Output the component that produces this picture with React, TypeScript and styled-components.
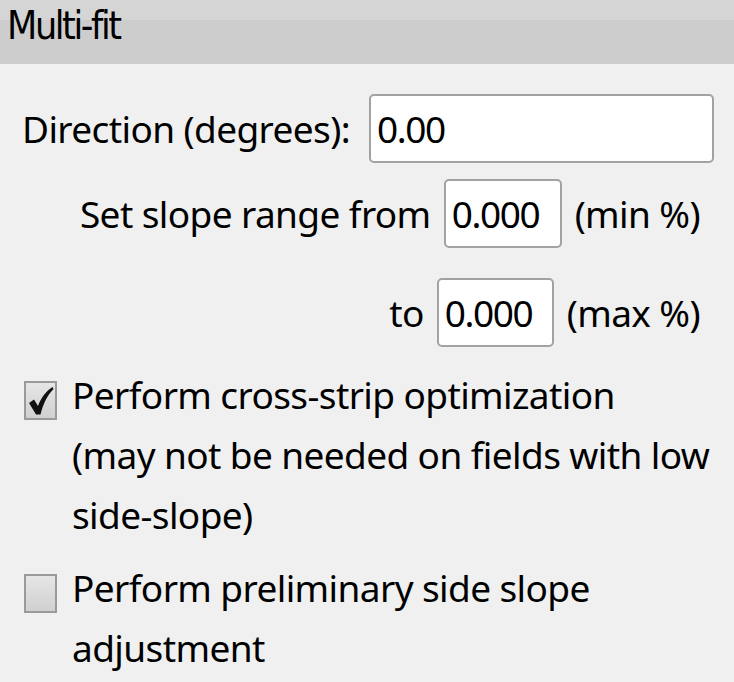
import React from "react";
import styled, { createGlobalStyle } from "styled-components";

const Global = createGlobalStyle`
  html, body { margin: 0; padding: 0; background: #f0f0f0; }
  body { font-family: "Noto Sans", "Open Sans", sans-serif; color: #000; }
`;

const Page = styled.div`
  width: 734px;
  height: 682px;
  overflow: hidden;
  background: #f0f0f0;
`;

const Header = styled.div`
  height: 64px;
  box-sizing: border-box;
  background: linear-gradient(#d5d5d5 0, #d5d5d5 20px, #cdcdcd 20px, #cdcdcd 100%);
  padding: 2px 0 0 7px;
  display: flex;
  align-items: flex-start;
`;

const HeaderTitle = styled.span`
  font-family: "Liberation Sans Narrow", "DejaVu Sans Condensed", "Noto Sans", sans-serif;
  font-stretch: condensed;
  font-size: 39px;
  line-height: 48px;
  letter-spacing: -2.4px;
  white-space: nowrap;
`;

const Body = styled.div`
  display: flex;
  flex-direction: column;
  padding: 30px 20px 0 22px;
`;

const Row = styled.div<{ $right?: boolean; $mt?: number }>`
  display: flex;
  align-items: center;
  justify-content: ${(p) => (p.$right ? "flex-end" : "flex-start")};
  padding-right: ${(p) => (p.$right ? "14px" : "0")};
  margin-top: ${(p) => p.$mt ?? 0}px;
  gap: 13px;
`;

const Label = styled.span`
  font-size: 37px;
  letter-spacing: -0.6px;
  line-height: 50px;
  white-space: nowrap;
`;

const Field = styled.div<{ $w: number; $h?: number }>`
  box-sizing: border-box;
  width: ${(p) => p.$w}px;
  height: ${(p) => p.$h ?? 69}px;
  background: #fff;
  border: 2px solid #a2a2a2;
  border-radius: 5px;
  display: flex;
  align-items: center;
  padding-left: 6px;
  font-size: 37px;
  letter-spacing: -1.4px;
`;

const CheckRow = styled.div<{ $mt: number }>`
  display: flex;
  align-items: flex-start;
  gap: 15px;
  margin-top: ${(p) => p.$mt}px;
  margin-left: 2px;
`;

const Box = styled.div`
  flex: none;
  box-sizing: border-box;
  width: 33px;
  height: 39px;
  margin-top: 10px;
  border: 2px solid #9a9a9a;
  background: linear-gradient(#e6e6e6, #d0d0d0);
  display: flex;
  align-items: center;
  justify-content: center;
`;

const CheckText = styled.div`
  font-size: 37px;
  letter-spacing: -0.6px;
  line-height: 60px;
  margin-top: -6px;
  white-space: nowrap;
`;

const Tick = () => (
  <svg width="26" height="30" viewBox="0 0 26 30">
    <path
      d="M1 17 L6 13.5 L10 20 C13 12 18 5 24.5 1 L25.5 3 C19.5 9 15 18 12.5 28.5 L8 28.5 Z"
      fill="#111"
    />
  </svg>
);

export default function App() {
  return (
    <Page>
      <Global />
      <Header>
        <HeaderTitle>Multi-fit</HeaderTitle>
      </Header>
      <Body>
        <Row>
          <Label>Direction (degrees):</Label>
          <Field $w={346} $h={69} style={{ marginLeft: 6 }}>0.00</Field>
        </Row>
        <Row $right $mt={16}>
          <Label>Set slope range from</Label>
          <Field $w={118}>0.000</Field>
          <Label>(min %)</Label>
        </Row>
        <Row $right $mt={30}>
          <Label>to</Label>
          <Field $w={117}>0.000</Field>
          <Label>(max %)</Label>
        </Row>
        <CheckRow $mt={24}>
          <Box>
            <Tick />
          </Box>
          <CheckText>
            Perform cross-strip optimization
            <br />
            (may not be needed on fields with low
            <br />
            side-slope)
          </CheckText>
        </CheckRow>
        <CheckRow $mt={19}>
          <Box />
          <CheckText>
            Perform preliminary side slope
            <br />
            adjustment
          </CheckText>
        </CheckRow>
      </Body>
    </Page>
  );
}
